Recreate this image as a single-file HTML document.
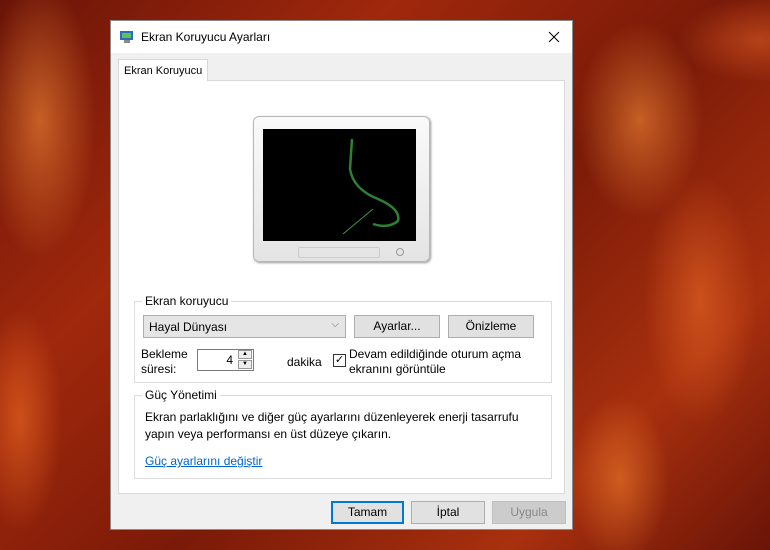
<!DOCTYPE html>
<html><head><meta charset="utf-8"><style>
*{box-sizing:border-box;margin:0;padding:0}
body{width:770px;height:550px;overflow:hidden;position:relative;font-family:"Liberation Sans",sans-serif;font-size:12px;color:#000;
background:
radial-gradient(ellipse 80px 200px at 40px 120px,rgba(255,150,60,.55),transparent 70%),
radial-gradient(ellipse 60px 160px at 20px 420px,rgba(255,120,40,.5),transparent 70%),
radial-gradient(ellipse 90px 140px at 640px 120px,rgba(255,150,60,.55),transparent 70%),
radial-gradient(ellipse 80px 180px at 700px 300px,rgba(240,110,40,.55),transparent 70%),
radial-gradient(ellipse 70px 120px at 620px 480px,rgba(255,140,50,.5),transparent 70%),
radial-gradient(ellipse 120px 60px at 760px 40px,rgba(230,100,40,.5),transparent 70%),
linear-gradient(135deg,#6a1408 0%,#a0280c 30%,#7a1a08 55%,#a8300e 80%,#6a1408 100%);}
.dlg{position:absolute;left:110px;top:20px;width:463px;height:510px;background:#f0f0f0;border:1px solid #8a8a8a}
.title{height:32px;background:#fff;position:relative}
.title span{position:absolute;left:30px;top:9px;font-size:12px}
.tab{position:absolute;left:7px;top:38px;width:90px;height:22px;background:#fff;border:1px solid #d9d9d9;border-bottom:none;padding:5px 0 0 5px;font-size:11px;z-index:2}
.page{position:absolute;left:7px;top:59px;width:447px;height:414px;background:#fff;border:1px solid #d9d9d9}
.grp{position:absolute;border:1px solid #dcdcdc}
.lg{position:absolute;top:-8px;left:7px;background:#fff;padding:0 3px}
.btn{position:absolute;height:23px;background:#e1e1e1;border:1px solid #adadad;text-align:center;line-height:21px}
a{color:#0066cc;text-decoration:underline}
</style></head><body>
<div class="dlg">
<div class="title">
<svg style="position:absolute;left:8px;top:8px" width="16" height="16"><rect x="1" y="2" width="13" height="9" fill="#2a6fb8"/><rect x="3" y="4" width="9" height="5" fill="#5fc05f"/><rect x="5" y="11" width="6" height="3" fill="#888"/></svg>
<span>Ekran Koruyucu Ayarları</span>
<svg style="position:absolute;right:12px;top:10px" width="12" height="12"><path d="M1 1L11 11M11 1L1 11" stroke="#000" stroke-width="1"/></svg></div>
<div class="tab">Ekran Koruyucu</div>
<div class="page">
<div style="position:absolute;left:134px;top:35px;width:177px;height:146px;border-radius:6px;background:linear-gradient(#fafafa,#e4e4e4);border:1px solid #b8b8b8;box-shadow:1px 1px 2px #999">
<div style="position:absolute;left:9px;top:12px;width:153px;height:112px;background:#000;overflow:hidden">
<svg width="153" height="112"><path d="M89 10 L87 40 Q90 60 115 70 Q138 80 135 92 Q125 100 110 95" stroke="#3fb84a" stroke-width="2.5" fill="none" opacity=".7"/><path d="M110 80 L80 105" stroke="#3a9a40" stroke-width="1" fill="none"/></svg></div>
<div style="position:absolute;left:44px;top:130px;width:82px;height:11px;border:1px solid #ccc;border-radius:2px"></div>
<div style="position:absolute;left:142px;top:131px;width:8px;height:8px;border:1px solid #999;border-radius:50%"></div>
</div>
<div class="grp" style="left:15px;top:220px;width:418px;height:82px"><div class="lg">Ekran koruyucu</div>
<div style="position:absolute;left:8px;top:13px;width:203px;height:23px;background:#e5e5e5;border:1px solid #adadad;padding:4px 5px">Hayal Dünyası<span style="position:absolute;right:6px;top:3px;font-size:10px;color:#666">⌵</span></div>
<div class="btn" style="left:219px;top:13px;width:86px">Ayarlar...</div>
<div class="btn" style="left:313px;top:13px;width:86px">Önizleme</div>
<div style="position:absolute;left:6px;top:45px;line-height:15px">Bekleme<br>süresi:</div>
<div style="position:absolute;left:62px;top:47px;width:57px;height:22px;border:1px solid #7a7a7a;background:#fff;padding:3px 20px 0 0;text-align:right">4</div>
<div style="position:absolute;left:103px;top:48px;width:14px;height:9px;border:1px solid #999;background:#eee;font-size:6px;text-align:center">▲</div>
<div style="position:absolute;left:103px;top:58px;width:14px;height:9px;border:1px solid #999;background:#eee;font-size:6px;text-align:center">▼</div>
<div style="position:absolute;left:152px;top:53px">dakika</div>
<div style="position:absolute;left:198px;top:52px;width:13px;height:13px;border:1px solid #333;font-size:11px;line-height:11px;text-align:center">✓</div>
<div style="position:absolute;left:214px;top:45px;line-height:15px">Devam edildiğinde oturum açma<br>ekranını görüntüle</div>
</div>
<div class="grp" style="left:15px;top:314px;width:418px;height:84px"><div class="lg">Güç Yönetimi</div>
<div style="position:absolute;left:10px;top:13px;line-height:17px">Ekran parlaklığını ve diğer güç ayarlarını düzenleyerek enerji tasarrufu<br>yapın veya performansı en üst düzeye çıkarın.</div>
<div style="position:absolute;left:10px;top:58px"><a>Güç ayarlarını değiştir</a></div>
</div>
</div>
<div class="btn" style="left:220px;top:480px;width:73px;border:2px solid #0078d7;line-height:19px">Tamam</div>
<div class="btn" style="left:300px;top:480px;width:74px">İptal</div>
<div class="btn" style="left:381px;top:480px;width:74px;background:#ccc;border-color:#bfbfbf;color:#888">Uygula</div>
</div>
</body></html>
